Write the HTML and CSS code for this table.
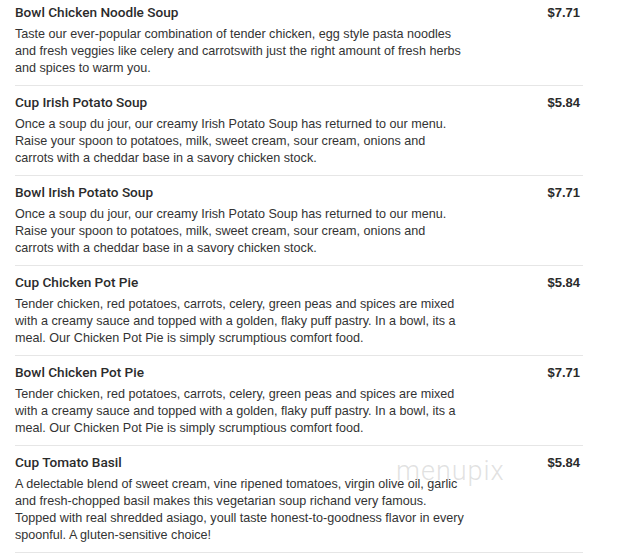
FILE: index.html
```html
<!DOCTYPE html>
<html lang="en">
<head>
    <meta charset="UTF-8">
    <meta name="viewport" content="width=device-width, initial-scale=1.0">
    <title>Soups</title>
    <link rel="stylesheet" href="styles.css">
</head>
<body>
    <div class="menu">
        <div class="menu-item">
            <div class="item-info">
                <h3 class="item-name">Bowl Chicken Noodle Soup</h3>
                <p class="item-desc">Taste our ever-popular combination of tender chicken, egg style pasta noodles and fresh veggies like celery and carrotswith just the right amount of fresh herbs and spices to warm you.</p>
            </div>
            <div class="item-price">$7.71</div>
        </div>
        <div class="menu-item">
            <div class="item-info">
                <h3 class="item-name">Cup Irish Potato Soup</h3>
                <p class="item-desc">Once a soup du jour, our creamy Irish Potato Soup has returned to our menu. Raise your spoon to potatoes, milk, sweet cream, sour cream, onions and carrots with a cheddar base in a savory chicken stock.</p>
            </div>
            <div class="item-price">$5.84</div>
        </div>
        <div class="menu-item">
            <div class="item-info">
                <h3 class="item-name">Bowl Irish Potato Soup</h3>
                <p class="item-desc">Once a soup du jour, our creamy Irish Potato Soup has returned to our menu. Raise your spoon to potatoes, milk, sweet cream, sour cream, onions and carrots with a cheddar base in a savory chicken stock.</p>
            </div>
            <div class="item-price">$7.71</div>
        </div>
        <div class="menu-item">
            <div class="item-info">
                <h3 class="item-name">Cup Chicken Pot Pie</h3>
                <p class="item-desc">Tender chicken, red potatoes, carrots, celery, green peas and spices are mixed with a creamy sauce and topped with a golden, flaky puff pastry. In a bowl, its a meal. Our Chicken Pot Pie is simply scrumptious comfort food.</p>
            </div>
            <div class="item-price">$5.84</div>
        </div>
        <div class="menu-item">
            <div class="item-info">
                <h3 class="item-name">Bowl Chicken Pot Pie</h3>
                <p class="item-desc">Tender chicken, red potatoes, carrots, celery, green peas and spices are mixed with a creamy sauce and topped with a golden, flaky puff pastry. In a bowl, its a meal. Our Chicken Pot Pie is simply scrumptious comfort food.</p>
            </div>
            <div class="item-price">$7.71</div>
        </div>
        <div class="menu-item">
            <div class="item-info">
                <h3 class="item-name">Cup Tomato Basil</h3>
                <p class="item-desc">A delectable blend of sweet cream, vine ripened tomatoes, virgin olive oil, garlic and fresh-chopped basil makes this vegetarian soup richand very famous. Topped with real shredded asiago, youll taste honest-to-goodness flavor in every spoonful. A gluten-sensitive choice!</p>
            </div>
            <div class="item-price">$5.84</div>
        </div>
        <div class="watermark">menupix</div>
    </div>
</body>
</html>
```

FILE: styles.css
```css
body {
    margin: 0;
    padding: 0;
    background: #fff;
    font-family: "Liberation Sans", Arial, sans-serif;
    font-size: 12.6px;
    color: #333;
}
.menu {
    width: 568px;
    margin-left: 15px;
    position: relative;
}
.menu-item {
    display: flex;
    justify-content: space-between;
    padding: 8px 0;
    border-bottom: 1px solid #e6e6e6;
}
.menu-item:first-child {
    padding-top: 4px;
}
.item-name {
    margin: 0 0 5px;
    font-family: Roboto, "Liberation Sans", sans-serif;
    font-size: 13.6px;
    font-weight: 500;
    line-height: 17px;
    color: #2b2b2b;
}
.item-desc {
    margin: 0;
    width: 452px;
    line-height: 17px;
}
.item-price {
    font-size: 13px;
    font-weight: bold;
    line-height: 17px;
    padding-right: 3px;
    color: #2b2b2b;
}
/* image watermark */
.watermark {
    position: absolute;
    left: 381px;
    top: 455px;
    font-family: Roboto, sans-serif;
    font-size: 27px;
    font-weight: 300;
    letter-spacing: 1px;
    color: rgba(170, 170, 170, 0.35);
}
```
